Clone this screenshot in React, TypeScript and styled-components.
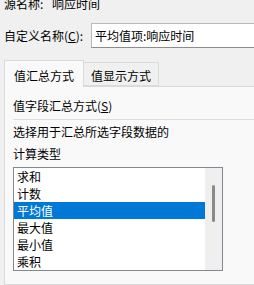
import styled, { createGlobalStyle } from "styled-components";

const GlobalStyle = createGlobalStyle`
  html, body {
    margin: 0;
    padding: 0;
    background: #f0f0f0;
    overflow: hidden;
  }
  body {
    font-family: "Noto Sans CJK SC", "Noto Sans", sans-serif;
    font-size: 12px;
    color: #000;
  }
`;

const Dialog = styled.div`
  width: 254px;
  height: 285px;
  overflow: hidden;
  display: flex;
  flex-direction: column;
`;

const SourceRow = styled.div`
  display: flex;
  margin-top: -5px;
  padding-left: 4px;
  height: 17px;
  line-height: 17px;
`;

const SourceLabel = styled.span`
  width: 48px;
`;

const NameRow = styled.div`
  display: flex;
  align-items: center;
  margin-top: 11px;
  padding-left: 4px;
  height: 25px;
`;

const NameLabel = styled.label`
  width: 87px;
  line-height: 17px;
`;

const Key = styled.span`
  text-decoration: underline;
`;

const NameInput = styled.div`
  flex: 1;
  height: 23px;
  line-height: 23px;
  margin-right: -20px;
  padding-left: 3px;
  background: #fff;
  border: 1px solid #b9b9b9;
  border-bottom-color: #8c8c8c;
`;

const TabStrip = styled.div`
  display: flex;
  align-items: flex-end;
  margin-top: 12px;
  padding-left: 4px;
  height: 26px;
  position: relative;
  z-index: 1;
`;

const Tab = styled.div<{ $active?: boolean }>`
  box-sizing: border-box;
  height: ${({ $active }) => ($active ? "27px" : "24px")};
  margin-bottom: ${({ $active }) => ($active ? "-1px" : "0")};
  padding: 0 ${({ $active }) => ($active ? "9px" : "7px")};
  line-height: ${({ $active }) => ($active ? "29px" : "25px")};
  background: ${({ $active }) => ($active ? "#f9f9f9" : "#f0f0f0")};
  border: 1px solid #dadada;
  border-bottom: ${({ $active }) => ($active ? "none" : "1px solid #dadada")};
  border-left: ${({ $active }) => ($active ? "1px solid #dadada" : "none")};
`;

const Panel = styled.div`
  flex: 1;
  margin-left: 4px;
  margin-right: -10px;
  padding: 10px 0 0 8px;
  background: #f9f9f9;
  border: 1px solid #dadada;
  display: flex;
  flex-direction: column;
`;

const Heading = styled.div`
  line-height: 17px;
`;

const Separator = styled.div`
  height: 1px;
  margin-top: 5px;
  background: #dcdcdc;
`;

const Hint = styled.div`
  margin-top: 1px;
  line-height: 22px;
`;

const ListBox = styled.div`
  display: flex;
  width: 210px;
  height: 104px;
  box-sizing: border-box;
  margin-top: 2px;
  background: #fff;
  border: 1px solid #828790;
`;

const Items = styled.div`
  flex: 1;
  display: flex;
  flex-direction: column;
`;

const Item = styled.div<{ $selected?: boolean }>`
  height: 17px;
  line-height: 17px;
  padding-left: 3px;
  background: ${({ $selected }) => ($selected ? "#0078d7" : "transparent")};
  color: ${({ $selected }) => ($selected ? "#fff" : "#000")};
`;

const ScrollTrack = styled.div`
  width: 17px;
  background: #efefef;
  display: flex;
  justify-content: center;
  padding-top: 17px;
`;

const ScrollThumb = styled.div`
  width: 3px;
  height: 37px;
  border-radius: 2px;
  background: #8a8a8a;
`;

const items = ["求和", "计数", "平均值", "最大值", "最小值", "乘积"];

export default function App() {
  return (
    <Dialog>
      <GlobalStyle />
      <SourceRow>
        <SourceLabel>源名称:</SourceLabel>
        <span>响应时间</span>
      </SourceRow>
      <NameRow>
        <NameLabel>
          自定义名称(<Key>C</Key>):
        </NameLabel>
        <NameInput>平均值项:响应时间</NameInput>
      </NameRow>
      <TabStrip>
        <Tab $active>值汇总方式</Tab>
        <Tab>值显示方式</Tab>
      </TabStrip>
      <Panel>
        <Heading>
          值字段汇总方式(<Key>S</Key>)
        </Heading>
        <Separator />
        <Hint>
          选择用于汇总所选字段数据的
          <br />
          计算类型
        </Hint>
        <ListBox>
          <Items>
            {items.map((name) => (
              <Item key={name} $selected={name === "平均值"}>
                {name}
              </Item>
            ))}
          </Items>
          <ScrollTrack>
            <ScrollThumb />
          </ScrollTrack>
        </ListBox>
      </Panel>
    </Dialog>
  );
}
